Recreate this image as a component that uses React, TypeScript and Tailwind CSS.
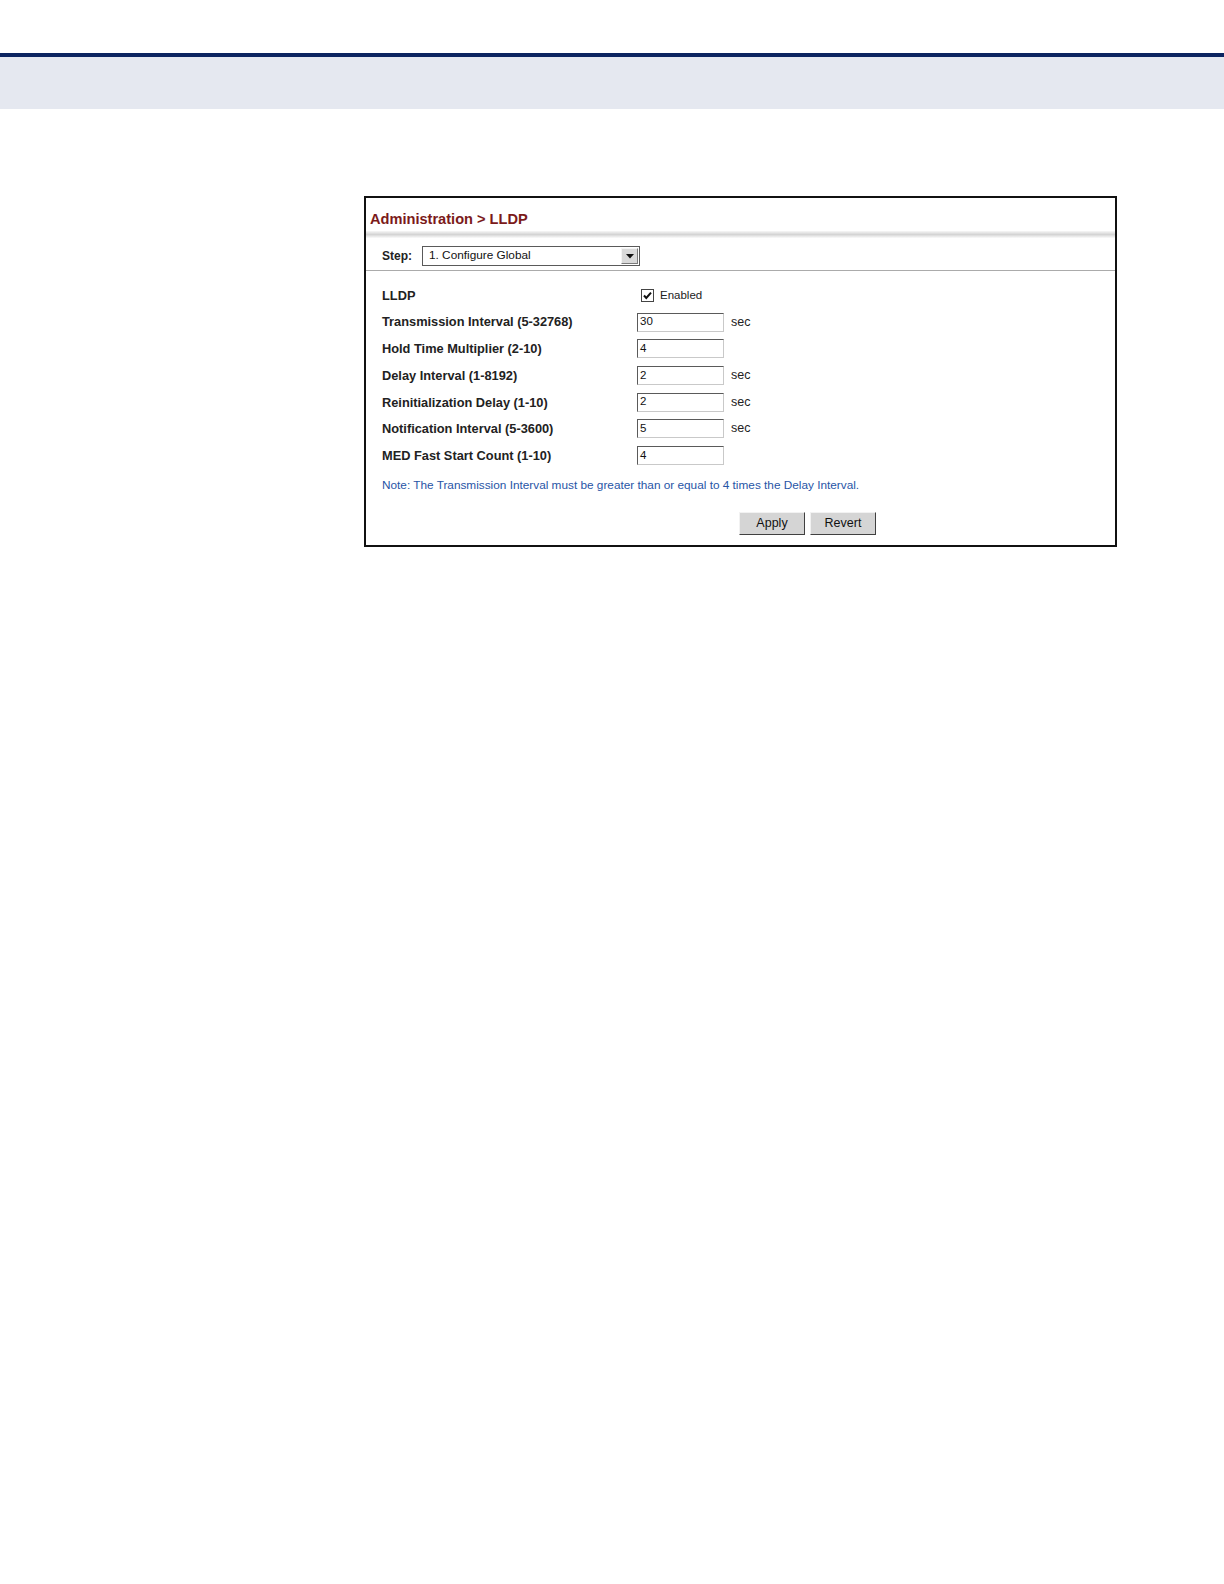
import React from "react";

const rows = [
  { label: "Transmission Interval (5-32768)", value: "30", unit: "sec" },
  { label: "Hold Time Multiplier (2-10)", value: "4", unit: "" },
  { label: "Delay Interval (1-8192)", value: "2", unit: "sec" },
  { label: "Reinitialization Delay (1-10)", value: "2", unit: "sec" },
  { label: "Notification Interval (5-3600)", value: "5", unit: "sec" },
  { label: "MED Fast Start Count (1-10)", value: "4", unit: "" },
];

function TextBox({ value }: { value: string }) {
  return (
    <div className="flex h-[19px] w-[87px] items-center border border-t-[#5a5a5a] border-l-[#5a5a5a] border-r-[#c9c9c9] border-b-[#c9c9c9] bg-white pl-[2px] text-[11.5px] text-[#111]">
      {value}
    </div>
  );
}

function Check() {
  return (
    <svg width="13" height="13" viewBox="0 0 13 13">
      <rect x="0.5" y="0.5" width="12" height="12" fill="#fff" stroke="#444" />
      <path d="M3 6.5 L5.3 9 L10 3.6" fill="none" stroke="#111" strokeWidth="2" />
    </svg>
  );
}

export default function App() {
  return (
    <div className="min-h-[1584px] bg-white font-['Liberation_Sans',Arial,sans-serif]">
      {/* page header */}
      <div className="h-[53px]" />
      <div className="h-[4px] bg-[#0c2461]" />
      <div className="h-[52px] bg-[#e5e8f0]" />

      <div className="pl-[364px] pt-[87px]">
        <div className="w-[753px] border-2 border-[#111] bg-white">
          {/* title */}
          <div className="pl-[4px] pt-[13px] text-[14.6px] font-bold leading-[16px] text-[#7b1a1a]">
            Administration &gt; LLDP
          </div>
          <div className="mt-[4px] h-[7px] bg-gradient-to-b from-[#f7f7f7] via-[#d4d4d4] to-[#fbfbfb]" />

          {/* step */}
          <div className="mt-[8px] flex items-center pl-[16px]">
            <span className="w-[40px] text-[12px] font-bold text-[#222]">Step:</span>
            <div className="flex h-[20px] w-[218px] items-center justify-between border border-[#5a5a5a] bg-white">
              <span className="pl-[6px] text-[11.8px] text-[#111]">1. Configure Global</span>
              <div className="mr-[1px] flex h-[16px] w-[17px] items-center justify-center border border-t-[#f4f4f4] border-l-[#f4f4f4] border-r-[#7a7a7a] border-b-[#7a7a7a] bg-[#d9d9d9]">
                <svg width="8" height="5" viewBox="0 0 8 5">
                  <path d="M0 0 H8 L4 4.5 Z" fill="#111" />
                </svg>
              </div>
            </div>
          </div>
          <div className="mt-[4px] h-px bg-[#ababab]" />

          {/* form */}
          <div className="mt-[11px] pl-[16px]">
            <div className="flex h-[26.7px] items-center">
              <div className="w-[255px] text-[12.8px] font-bold text-[#222]">LLDP</div>
              <div className="flex items-center pl-[4px]">
                <Check />
                <span className="pl-[6px] text-[11.5px] text-[#222]">Enabled</span>
              </div>
            </div>
            {rows.map((r) => (
              <div key={r.label} className="flex h-[26.7px] items-center">
                <div className="w-[255px] text-[12.8px] font-bold text-[#222]">{r.label}</div>
                <TextBox value={r.value} />
                {r.unit && <span className="pl-[7px] text-[12.5px] text-[#222]">{r.unit}</span>}
              </div>
            ))}
          </div>

          <div className="mt-[9px] pl-[16px] text-[11.8px] leading-[14px] text-[#2855a6]">
            Note: The Transmission Interval must be greater than or equal to 4 times the Delay Interval.
          </div>

          {/* buttons */}
          <div className="mt-[20px] mb-[10px] flex gap-[5px] pl-[373px]">
            <button className="h-[23px] w-[66px] border border-t-[#f2f2f2] border-l-[#f2f2f2] border-r-[#404040] border-b-[#404040] bg-[#d5d5d5] text-[12.5px] text-[#111]">
              Apply
            </button>
            <button className="h-[23px] w-[66px] border border-t-[#f2f2f2] border-l-[#f2f2f2] border-r-[#404040] border-b-[#404040] bg-[#d5d5d5] text-[12.5px] text-[#111]">
              Revert
            </button>
          </div>
        </div>
      </div>
    </div>
  );
}
